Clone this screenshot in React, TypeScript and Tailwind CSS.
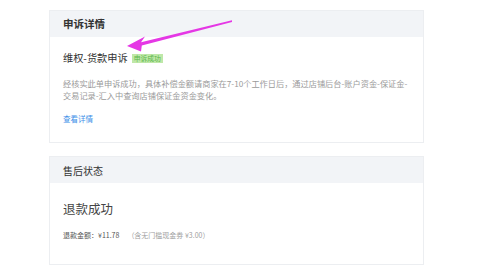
import React from "react";

const font = { fontFamily: '"Noto Sans CJK SC", "Liberation Sans", sans-serif' };

function Arrow() {
  // magenta annotation arrow drawn over the card
  return (
    <svg className="absolute left-0 top-0 pointer-events-none" width="500" height="267" viewBox="0 0 500 267">
      <polygon
        points="127,46 145,36.5 141,42.3 232,20.2 232,22 141.8,45.6 141,51.5"
        fill="#e537e5"
      />
    </svg>
  );
}

export default function App() {
  return (
    <div className="relative w-[500px] h-[267px] bg-white overflow-hidden" style={font}>
      <div className="pl-[49px] pt-[10px] flex flex-col gap-[13px]">
        <div className="w-[375px] border border-[#eceef1] bg-white">
          <div className="h-[26px] bg-[#f2f4f7] px-[13px] flex items-center">
            <span className="text-[10.5px] font-bold text-[#333]">申诉详情</span>
          </div>
          <div className="px-[13px] pt-[14px] pb-[17px]">
            <div className="h-[14px] flex items-center gap-[4px]">
              <span className="text-[10.2px] text-[#333] leading-[14px]">维权-货款申诉</span>
              <span className="h-[9px] px-[2px] bg-[#bfe8a8] text-[#5bb64a] text-[6.8px] leading-[9px]">申诉成功</span>
            </div>
            <div className="mt-[12px] text-[8.2px] leading-[12px] text-[#9a9a9a]">
              <div className="whitespace-nowrap">经核实此单申诉成功，具体补偿金额请商家在7-10个工作日后，通过店铺后台-账户资金-保证金-</div>
              <div className="whitespace-nowrap">交易记录-汇入中查询店铺保证金资金变化。</div>
            </div>
            <div className="mt-[12px] text-[7.5px] leading-[12px] text-[#3d8fe8]">查看详情</div>
          </div>
        </div>

        <div className="w-[375px] border border-[#eceef1] bg-white">
          <div className="h-[26px] bg-[#f2f4f7] px-[13px] flex items-center">
            <span className="text-[10px] text-[#333]">售后状态</span>
          </div>
          <div className="px-[13px] pt-[18px] pb-[24px]">
            <div className="text-[12.5px] leading-[16px] text-[#444]">退款成功</div>
            <div className="mt-[13px] text-[7px] leading-[10px] whitespace-nowrap">
              <span className="text-[#555]">退款金额：¥11.78</span>
              <span className="ml-[8px] text-[#a0a0a0]">（含无门槛现金券 ¥3.00）</span>
            </div>
          </div>
        </div>
      </div>
      <Arrow />
    </div>
  );
}
